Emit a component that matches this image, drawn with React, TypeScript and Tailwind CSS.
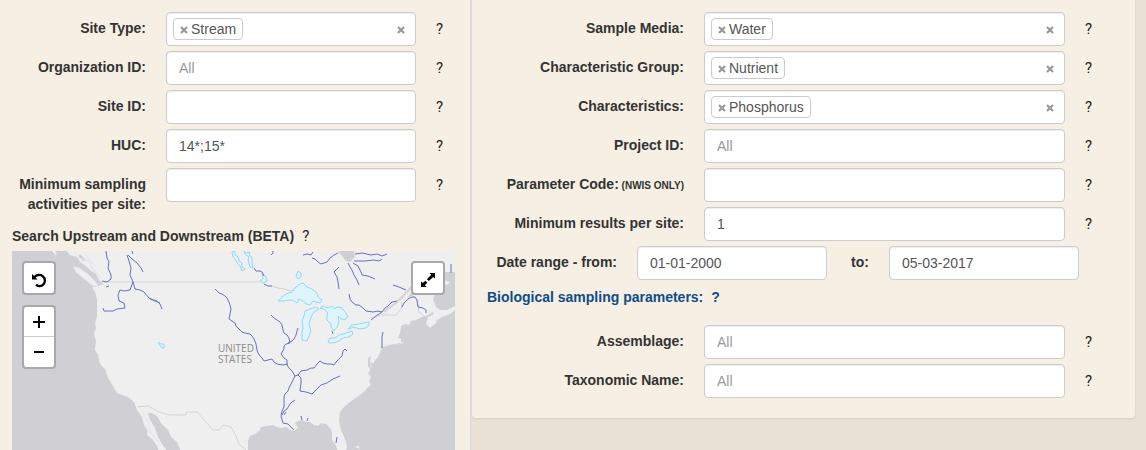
import type { ReactNode } from "react";

const fieldClass =
  "h-[34px] w-full min-w-0 rounded border border-[#cccccc] bg-white px-3 text-sm text-[#555555] shadow-[inset_0_1px_1px_rgba(0,0,0,0.075)] outline-none placeholder:text-[#999999] focus:border-[#66afe9]";

function Help({ topic }: { topic: string }) {
  return (
    <button
      type="button"
      aria-label={`Help: ${topic}`}
      className="h-[34px] cursor-pointer justify-self-start pt-px font-['Roboto','Liberation_Sans',sans-serif] text-[15px] leading-[33px] text-[#222222]"
    >
      ?
    </button>
  );
}

function Cross() {
  return (
    <svg viewBox="0 0 8 8" className="size-2" aria-hidden="true">
      <path d="M1 1 L7 7 M7 1 L1 7" stroke="#999999" strokeWidth="2.2" fill="none" />
    </svg>
  );
}

function TextField({ id, value, placeholder }: { id: string; value?: string; placeholder?: string }) {
  return <input id={id} type="text" defaultValue={value} placeholder={placeholder} className={fieldClass} />;
}

function TagField({ id, tag }: { id: string; tag: string }) {
  return (
    <div className="flex h-[34px] w-full min-w-0 items-center rounded border border-[#cccccc] bg-white pr-2.5 pl-1.5 text-sm text-[#555555] shadow-[inset_0_1px_1px_rgba(0,0,0,0.075)]">
      <span className="flex h-[22px] items-center gap-[3px] rounded border border-[#cccccc] px-1.5 leading-5">
        <button type="button" aria-label={`Remove ${tag}`} className="mt-0.5 cursor-pointer">
          <Cross />
        </button>
        {tag}
      </span>
      <input id={id} type="text" className="h-full min-w-0 flex-1 bg-transparent px-2 outline-none" />
      <button type="button" aria-label="Clear all" className="mt-0.5 cursor-pointer">
        <Cross />
      </button>
    </div>
  );
}

function SiteRow({ id, label, children }: { id: string; label: string; children: ReactNode }) {
  return (
    <div className="grid grid-cols-[134px_1fr_34px] items-start gap-x-5">
      <label htmlFor={id} className="pt-1.5 text-right text-sm leading-5 font-bold">
        {label}
      </label>
      {children}
      <Help topic={label} />
    </div>
  );
}

function SampleRow({ id, label, note, children }: { id: string; label: string; note?: string; children: ReactNode }) {
  return (
    <div className="grid grid-cols-[212px_1fr_50px] items-start gap-x-5">
      <label htmlFor={id} className="pt-1.5 text-right text-sm leading-5 font-bold whitespace-nowrap">
        {label}
        {note && <span className="text-[10px]"> {note}</span>}
      </label>
      {children}
      <Help topic={label} />
    </div>
  );
}

const rivers = [
  "M106 251 L107 258 L109 262 L108 268 L111 275 L111 279 L107 282 L102 281",
  "M127 255 L129 261 L131 268 L130 275 L133 282 L130 290 L124 291 L120 290 L118 295 L119 301 L124 303 L125 308 L117 309 L113 311 L104 311 L103 308",
  "M133 282 L135 289 L140 290 L144 292 L149 298 L155 301 L160 303",
  "M128 255 L132 259 L137 263 L141 268 L143 272 M132 251 L133 254 M106 287 L109 286",
  "M150 299 L157 301 L160 304 L162 309",
  "M215 289 L217 291 L219 293 L222 294 L225 296 L227 298 L229 302 L230 305 L231 309 L230 314 L229 319 L232 321 L235 323 L236 326 L239 329 L242 332 L245 333 L250 334 L252 336 L254 339 L256 344 L257 350 L258 353 L260 356 L262 358 L264 361 L268 360 L272 359 L274 362 L277 364 L283 365 L288 364",
  "M271 315 L274 318 L277 320 L280 322 L282 325 L283 330 L284 333 L287 335 L289 338 L290 343 L286 344 L284 346 L284 349 L281 354 L284 358 L287 360 L287 365 L289 368 L292 371 L295 376",
  "M298 328 L297 331 L296 335 L294 339 L292 341 L288 343",
  "M295 376 L293 380 L291 384 L289 388 L288 391 L285 394 L284 397 L284 407 L282 411 L281 416 L283 423 L288 424 L291 427 L294 430",
  "M295 376 L298 375 L301 371 L307 370 L311 368 L314 368 L317 364 L320 361 L323 363 L327 364 L331 364 L334 365 L336 362 L338 360 L340 358 L342 356 L343 351 L345 349 L347 351",
  "M298 375 L301 378 L301 383 L300 391 L306 392 L312 394 L314 392 L317 389 L321 385 L327 383 L333 379 L340 376",
  "M295 400 L292 402 L290 404 L287 409 L284 411 L282 415 M286 412 L284 415",
  "M254 268 L256 271 L260 271 L262 272 L264 276 M264 284 L268 286 L272 286",
  "M271 255 L273 253 L273 251 M303 255 L307 254 L311 255 L313 252",
  "M312 258 L315 259 L318 262 L321 264 L327 262 L330 258 L334 255 L338 253",
  "M355 254 L362 253 L371 255 L377 254 L382 256 L387 254",
  "M354 261 L365 261 L374 260 L379 261 L382 259",
  "M353 263 L358 266 L361 272 L362 275 L368 276 L375 279",
  "M348 263 L350 267 L352 270 L354 275 L357 280 L359 285",
  "M339 267 L336 270 L334 272 L337 277 L338 282 L339 289",
  "M349 294 L350 299 L352 302 L356 305 L359 305 L363 308 L366 311 L373 312 L378 311 L382 312 L385 308 L388 306 L392 302 L397 301",
  "M382 312 L376 316 L371 320",
  "M393 285 L399 287 L406 290 M402 307 L404 303 L408 299 L412 297 L415 297 L417 300 L418 307 L423 308 L426 310 L426 313",
  "M383 332 L382 337 L382 348 M451 264 L451 273",
  "M301 416 L302 420 M308 418 L307 421 M337 437 L336 443 M332 331 L333 334",
];

const lakes = [
  "M278 301 L282 297 L286 294 L292 292 L296 287 L300 284 L303 283 L307 287 L312 289 L317 293 L318 297 L322 300 L320 303 L316 302 L313 301 L310 305 L306 304 L303 301 L299 299 L297 303 L292 300 L288 300 L284 301 Z",
  "M302 340 L302 332 L303 328 L302 321 L304 316 L305 311 L310 309 L316 307 L319 309 L315 311 L312 315 L310 320 L309 325 L311 331 L309 336 L307 341 Z",
  "M320 308 L323 306 L328 308 L332 306 L335 309 L337 307 L342 308 L346 313 L348 317 L344 320 L340 318 L338 316 L339 322 L337 327 L334 331 L331 327 L331 324 L327 320 L327 315 L328 313 L324 309 Z",
  "M328 341 L330 338 L335 338 L339 335 L343 334 L352 331 L353 334 L349 337 L343 338 L339 341 L333 343 L329 343 Z",
  "M348 329 L350 327 L352 325 L359 324 L364 323 L369 322 L369 325 L366 328 L359 329 L354 327 Z",
  "M232 252 L235 251 L235 255 L238 257 L239 261 L242 263 L242 267 L245 269 L242 271 L240 266 L237 263 L235 259 L233 257 Z",
  "M244 251 L246 253 L250 252 L249 255 L252 257 L252 262 L253 268 L250 267 L249 263 L248 260 L249 257 L245 254 Z",
  "M262 273 L266 277 L267 281 L263 283 L260 281 L263 279 Z",
  "M296 276 L298 271 L301 273 L301 277 L298 279 Z",
  "M158 342 L161 344 L164 344 L164 348 L162 348 Z",
];

function RiverMap() {
  return (
    <svg
      viewBox="12 251 443 199"
      preserveAspectRatio="xMidYMin slice"
      className="block h-full w-full bg-[#d0cfd4]"
      role="img"
      aria-label="Map of the United States with major rivers"
    >
      <path
        fill="#efefef"
        d="M65 249 L70 255 L77 257 L80 262 L86 266 L91 271 L96 274 L99 280 L104 284 L98 286 L92 287 L95 292 L97 299 L97 317 L95 323 L96 328 L94 334 L96 341 L95 350 L98 355 L100 364 L105 369 L108 378 L113 386 L117 393 L122 395 L128 397 L134 402 L137 410 L142 417 L144 425 L148 431 L147 435 L152 439 L157 446 L159 452 L168 452 L162 444 L158 437 L155 428 L150 420 L148 413 L152 413 L157 416 L161 423 L168 430 L171 437 L177 442 L181 452 L248 452 L248 441 L250 436 L255 434 L260 430 L261 427 L267 426 L273 425 L277 427 L281 428 L287 427 L290 430 L294 431 L298 428 L295 423 L298 421 L302 420 L306 422 L310 422 L314 425 L318 426 L321 423 L326 424 L329 427 L332 431 L332 440 L336 446 L338 452 L346 452 L347 447 L345 439 L341 430 L339 421 L340 412 L344 407 L350 402 L357 397 L365 391 L367 388 L371 385 L369 382 L371 376 L368 374 L370 370 L373 364 L375 360 L378 357 L380 353 L382 348 L391 345 L402 344 L404 342 L401 342 L401 339 L398 338 L400 333 L401 326 L405 324 L409 325 L411 321 L416 320 L422 317 L426 316 L433 312 L434 314 L428 317 L426 324 L430 328 L436 323 L437 320 L442 317 L450 314 L455 310 L455 306 L447 310 L440 310 L436 307 L433 300 L435 293 L420 292 L407 298 L414 289 L422 282 L434 274 L447 272 L455 272 L455 249 Z"
      />
      <path fill="#efefef" stroke="#e2e2e5" d="M73 266 L79 268 L88 274 L94 280 L99 287 L92 285 L83 278 L76 272 Z" />
      <path fill="#efefef" d="M52 251 L55 255 L57 254 L55 251 Z M439 279 L450 282 L447 285 L441 283 Z M434 309 L439 309 L436 312 Z M355 447 L358 445 L360 449 Z" />
      <path
        fill="#d0cfd4"
        d="M338 251 L354 251 L355 257 L350 262 L346 261 L341 255 Z M368 358 L371 356 L370 361 L374 365 L371 371 L368 366 Z M80 254 L86 260 L84 261 L78 257 Z"
      />
      <g fill="none" stroke="#d4d4d6" strokeWidth="1">
        <path d="M104 282 H260 M272 286 L278 288 L284 289 L290 291 L298 289 M137 407 L148 406 L159 412 L170 415 L186 415 V412 L197 412 L206 422 L213 430 L219 430 L223 425 L231 427 L236 436 L239 444 L246 450 M371 318 L380 315 H396 L401 309 L402 302 M417 300 L419 312 L425 317" />
        <path strokeWidth="2" d="M384 312 L397 302 L407 292 L414 284" />
        <path d="M380 348 L392 345 L402 343" />
      </g>
      <path fill="none" stroke="#e2e2e5" d="M74 252 L80 258 L89 261 L92 268 L100 277 M84 252 L88 258 L94 265 M143 412 L148 422 L151 434 L159 442 M370 360 L371 368" />
      <g fill="#dff5fd" stroke="#8fd8f5" strokeWidth="1" strokeLinejoin="round">
        {lakes.map((d) => (
          <path key={d} d={d} />
        ))}
      </g>
      <g fill="none" stroke="#6472c2" strokeWidth="1" strokeLinejoin="round">
        {rivers.map((d) => (
          <path key={d} d={d} />
        ))}
      </g>
      <g className="fill-[#8c8c8c] font-['Open_Sans','Noto_Sans',sans-serif] text-[10px]">
        <text x="218" y="352">UNITED</text>
        <text x="218" y="363">STATES</text>
      </g>
    </svg>
  );
}

const mapBox = "border-2 border-[#a9a8ad] bg-white bg-clip-padding text-black";

export default function App() {
  return (
    <main className="grid min-h-screen grid-cols-[472fr_663fr] bg-[#e8e1d4] pr-[11px] font-['Liberation_Sans',Arial,sans-serif] text-sm text-[#333333]">
      <section className="flex flex-col border-r-2 border-[#dddddd] bg-[#f6efe3] pt-3 pl-3">
        <div className="flex flex-col gap-[5px]">
          <SiteRow id="site-type" label="Site Type:">
            <TagField id="site-type" tag="Stream" />
          </SiteRow>
          <SiteRow id="organization" label="Organization ID:">
            <TextField id="organization" placeholder="All" />
          </SiteRow>
          <SiteRow id="site-id" label="Site ID:">
            <TextField id="site-id" />
          </SiteRow>
          <SiteRow id="huc" label="HUC:">
            <TextField id="huc" value="14*;15*" />
          </SiteRow>
          <SiteRow id="min-activities" label="Minimum sampling activities per site:">
            <TextField id="min-activities" />
          </SiteRow>
        </div>
        <div className="mt-3 flex h-5 items-center gap-2">
          <h2 className="text-sm leading-5 font-bold">Search Upstream and Downstream (BETA)</h2>
          <Help topic="Search upstream and downstream" />
        </div>
        <div className="relative mt-[5px] mr-[15px] h-[199px]">
          <RiverMap />
          <button
            type="button"
            aria-label="Reset map"
            className={`${mapBox} absolute top-2.5 left-2.5 flex size-[34px] cursor-pointer items-center justify-center rounded`}
          >
            <svg viewBox="0 0 16 16" className="mt-1 size-4" aria-hidden="true">
              <path d="M3.2 5.2 C5.2 2.9 9 2 11.7 4.1 C14.8 6.6 14.6 11.2 11.5 13.2 C9.3 14.6 6.8 14.2 5 12.6" fill="none" stroke="currentColor" strokeWidth="2.3" />
              <path d="M1 2 L1 7.4 L6.6 7.4 Z" fill="currentColor" />
            </svg>
          </button>
          <div className={`${mapBox} absolute top-[54px] left-2.5 flex w-[34px] flex-col divide-y divide-[#cccccc] rounded`}>
            <button type="button" aria-label="Zoom in" className="flex h-[30px] cursor-pointer items-center justify-center">
              <svg viewBox="0 0 12 12" className="size-3" aria-hidden="true">
                <path d="M0 6 H12 M6 0 V12" stroke="currentColor" strokeWidth="2" />
              </svg>
            </button>
            <button type="button" aria-label="Zoom out" className="flex h-[30px] cursor-pointer items-center justify-center">
              <svg viewBox="0 0 12 12" className="size-3" aria-hidden="true">
                <path d="M1 6 H11" stroke="currentColor" strokeWidth="2" />
              </svg>
            </button>
          </div>
          <button
            type="button"
            aria-label="Full screen"
            className={`${mapBox} absolute top-2.5 right-2.5 flex size-[34px] cursor-pointer items-center justify-center rounded`}
          >
            <svg viewBox="0 0 16 16" className="mt-1 size-4" aria-hidden="true">
              <path d="M9.5 1 H15 V6.5 L13.2 4.9 L8.8 9.1 L6.9 7.2 L11.2 2.8 Z" fill="currentColor" />
              <path d="M6.5 15 H1 V9.5 L2.8 11.1 L5.3 8.7 L7.3 10.7 L4.8 13.2 Z" fill="currentColor" />
            </svg>
          </button>
        </div>
      </section>

      <section className="self-start rounded-b bg-[#f6efe3] pt-3 pb-5 shadow-[0_1px_2px_#d5d0c5]">
        <div className="flex flex-col gap-[5px]">
          <SampleRow id="media" label="Sample Media:">
            <TagField id="media" tag="Water" />
          </SampleRow>
          <SampleRow id="group" label="Characteristic Group:">
            <TagField id="group" tag="Nutrient" />
          </SampleRow>
          <SampleRow id="characteristics" label="Characteristics:">
            <TagField id="characteristics" tag="Phosphorus" />
          </SampleRow>
          <SampleRow id="project" label="Project ID:">
            <TextField id="project" placeholder="All" />
          </SampleRow>
          <SampleRow id="parameter" label="Parameter Code:" note="(NWIS ONLY)">
            <TextField id="parameter" />
          </SampleRow>
          <SampleRow id="min-results" label="Minimum results per site:">
            <TextField id="min-results" value="1" />
          </SampleRow>
          <div className="grid grid-cols-[145px_1fr_22px_1fr] items-start gap-x-5 pr-14">
            <label htmlFor="date-from" className="pt-1.5 text-right text-sm leading-5 font-bold whitespace-nowrap">
              Date range - from:
            </label>
            <TextField id="date-from" value="01-01-2000" />
            <label htmlFor="date-to" className="pt-1.5 text-right text-sm leading-5 font-bold">
              to:
            </label>
            <TextField id="date-to" value="05-03-2017" />
          </div>
        </div>
        <div className="mt-[7px] flex h-5 items-center gap-2 pl-[15px] text-sm leading-5 font-bold text-[#0f4c8c]">
          <a href="#biological">Biological sampling parameters:</a>
          <button type="button" aria-label="Help: Biological sampling parameters" className="cursor-pointer">
            ?
          </button>
        </div>
        <div id="biological" className="mt-[18px] flex flex-col gap-[5px]">
          <SampleRow id="assemblage" label="Assemblage:">
            <TextField id="assemblage" placeholder="All" />
          </SampleRow>
          <SampleRow id="taxonomic" label="Taxonomic Name:">
            <TextField id="taxonomic" placeholder="All" />
          </SampleRow>
        </div>
      </section>
    </main>
  );
}
